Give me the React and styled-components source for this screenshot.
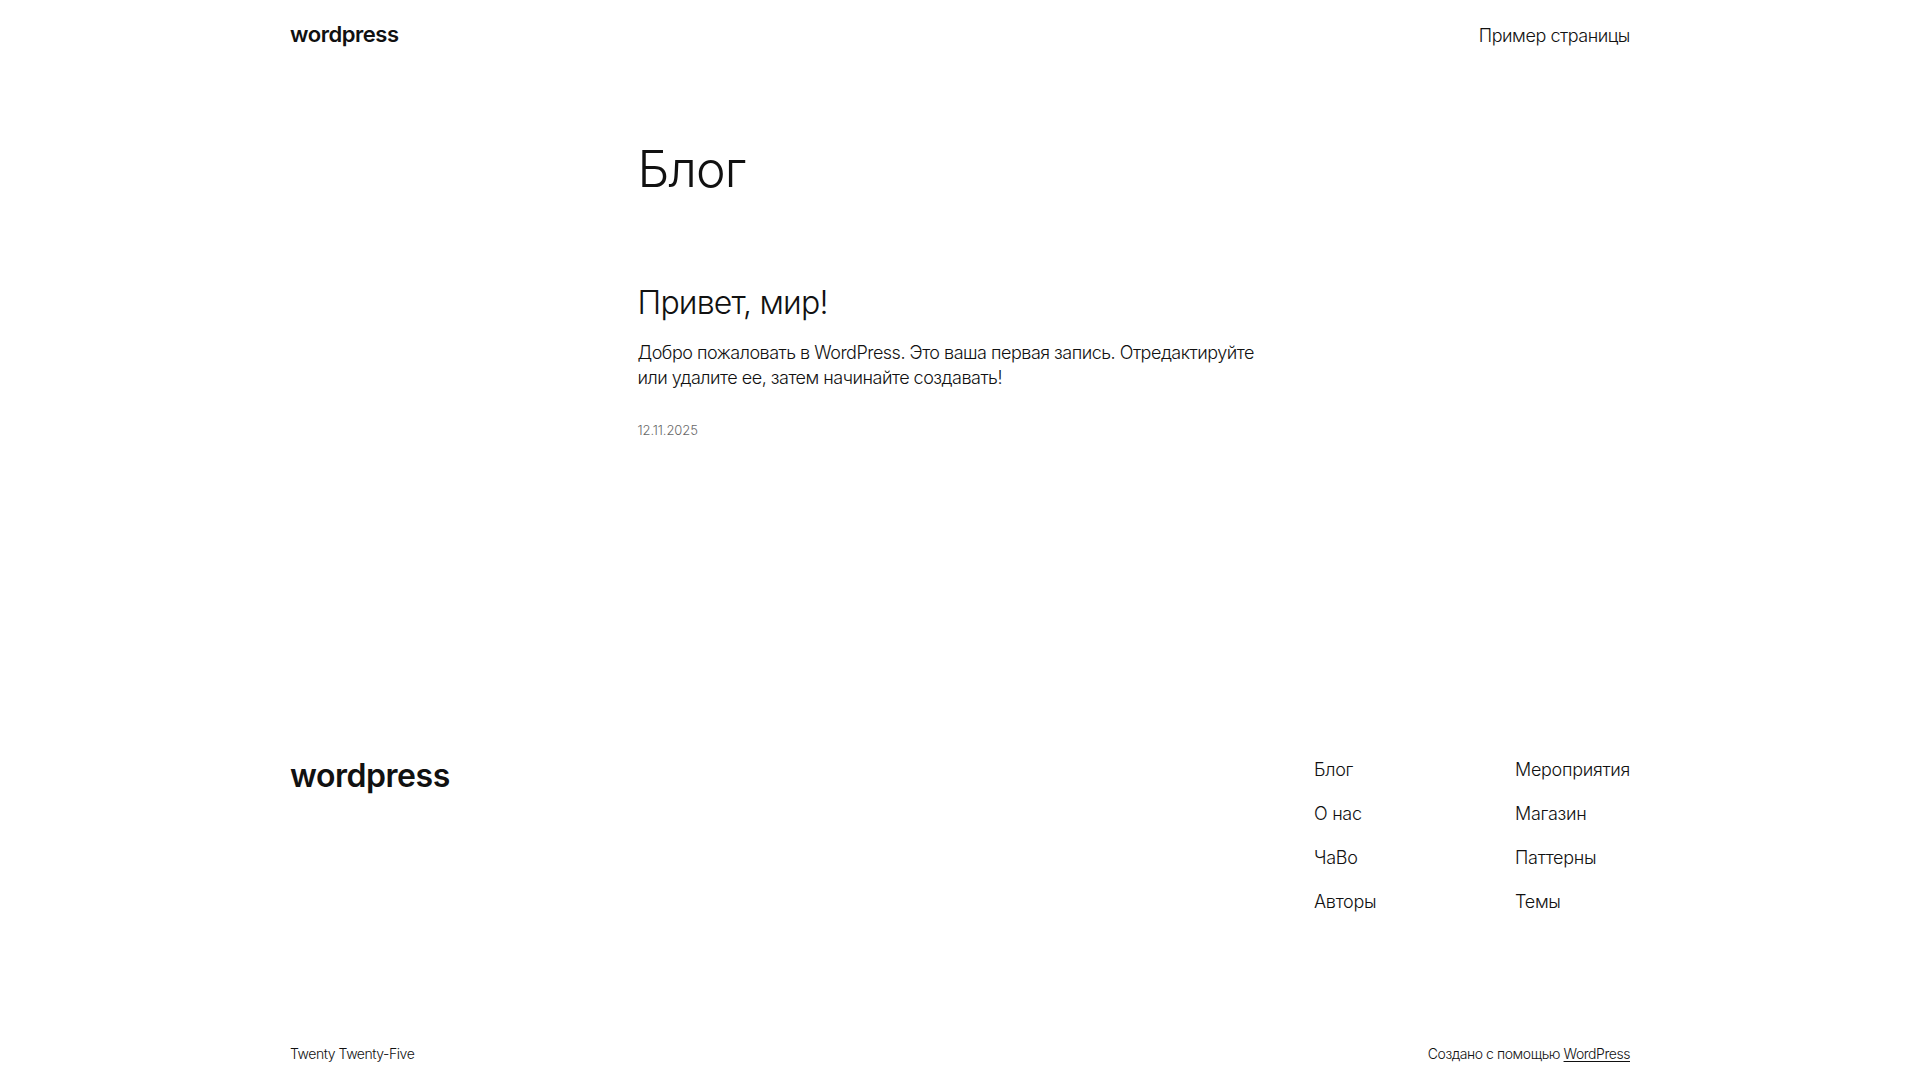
import React from "react";
import styled, { createGlobalStyle } from "styled-components";

const Global = createGlobalStyle`
  html, body { margin: 0; padding: 0; background: #ffffff; }
  body {
    font-family: Inter, "Noto Sans", "Liberation Sans", sans-serif;
    font-weight: 300;
    color: #111111;
    letter-spacing: -0.1px;
    -webkit-font-smoothing: antialiased;
  }
  a { color: inherit; }
`;

const Page = styled.div`
  display: flex;
  flex-direction: column;
  min-height: 100vh;
`;

const Wide = styled.div`
  width: 1340px;
  margin: 0 auto;
`;

const Header = styled(Wide)`
  display: flex;
  justify-content: space-between;
  align-items: baseline;
  padding-top: 19px;
`;

const SiteTitle = styled.a`
  font-size: ${(p) => p.$size}px;
  font-weight: 600;
  line-height: 1.4;
  letter-spacing: -0.45px;
  text-decoration: none;
`;

const HeaderLink = styled.a`
  font-size: 18px;
  line-height: 1.4;
  letter-spacing: -0.45px;
  text-decoration: none;
`;

const Main = styled.main`
  width: 645px;
  margin: 0 auto;
  padding-top: 92px;
`;

const PageTitle = styled.h1`
  margin: 0;
  font-size: 50px;
  font-weight: 300;
  line-height: 1.1;
  letter-spacing: -0.9px;
`;

const Post = styled.article`
  margin-top: 87px;
  display: flex;
  flex-direction: column;
`;

const PostTitle = styled.h2`
  margin: 0;
  font-size: 32px;
  font-weight: 300;
  line-height: 1.2;
  letter-spacing: -0.8px;
`;

const Excerpt = styled.p`
  margin: 18px 0 0;
  font-size: 18px;
  line-height: 1.4;
  letter-spacing: -0.5px;
`;

const PostDate = styled.time`
  margin-top: 30px;
  font-size: 13px;
  line-height: 1.4;
  letter-spacing: -0.1px;
  color: #686868;
`;

const Footer = styled(Wide)`
  margin-top: 315px;
  display: flex;
  flex-direction: column;
`;

const FooterTop = styled.div`
  display: flex;
  justify-content: space-between;
  align-items: flex-start;
`;

const NavGrid = styled.div`
  display: grid;
  grid-template-columns: 201px auto;
  padding-top: 3px;
`;

const NavColumn = styled.nav`
  display: flex;
  flex-direction: column;
  gap: 19px;
`;

const NavLink = styled.a`
  font-size: 18px;
  line-height: 1.4;
  letter-spacing: -0.3px;
  text-decoration: none;
`;

const FooterBottom = styled.div`
  margin-top: 129px;
  display: flex;
  justify-content: space-between;
  font-size: 14px;
  line-height: 1.4;
  letter-spacing: -0.45px;
  padding-bottom: 40px;
`;

const Credit = styled.span``;

const UnderLink = styled.a`
  text-decoration: underline;
  text-underline-offset: 2px;
  text-decoration-thickness: 1px;
`;

const col1 = ["Блог", "О нас", "ЧаВо", "Авторы"];
const col2 = ["Мероприятия", "Магазин", "Паттерны", "Темы"];

export default function App() {
  return (
    <Page>
      <Global />
      <Header as="header">
        <SiteTitle href="#" $size={22}>wordpress</SiteTitle>
        <HeaderLink href="#">Пример страницы</HeaderLink>
      </Header>
      <Main>
        <PageTitle>Блог</PageTitle>
        <Post>
          <PostTitle>Привет, мир!</PostTitle>
          <Excerpt>
            Добро пожаловать в WordPress. Это ваша первая запись. Отредактируйте
            или удалите ее, затем начинайте создавать!
          </Excerpt>
          <PostDate>12.11.2025</PostDate>
        </Post>
      </Main>
      <Footer as="footer">
        <FooterTop>
          <SiteTitle href="#" $size={32}>wordpress</SiteTitle>
          <NavGrid>
            <NavColumn>
              {col1.map((t) => (
                <NavLink key={t} href="#">{t}</NavLink>
              ))}
            </NavColumn>
            <NavColumn>
              {col2.map((t) => (
                <NavLink key={t} href="#">{t}</NavLink>
              ))}
            </NavColumn>
          </NavGrid>
        </FooterTop>
        <FooterBottom>
          <Credit>Twenty Twenty-Five</Credit>
          <Credit>
            Создано с помощью <UnderLink href="#">WordPress</UnderLink>
          </Credit>
        </FooterBottom>
      </Footer>
    </Page>
  );
}
